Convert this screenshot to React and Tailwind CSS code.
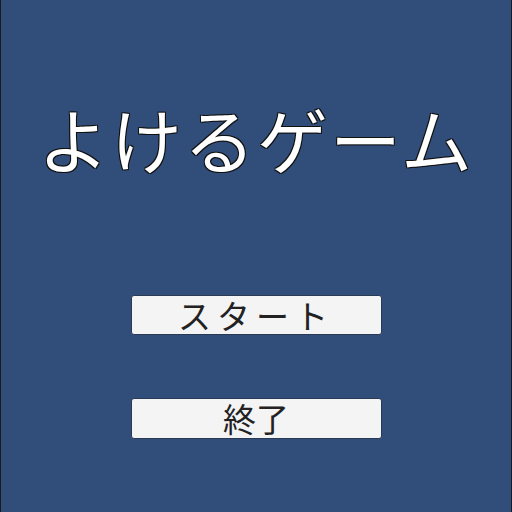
export default function App() {
    const jp = { fontFamily: '"Noto Sans CJK JP", "Noto Sans", sans-serif' };
    return (
        <div className="w-[512px] h-[512px] bg-[#314e7b] border-x border-[#1c1c1c] flex flex-col items-center" style={jp}>
            <h1
                className="mt-[95px] text-[71px] leading-[84px] font-normal text-white tracking-[2px]"
                style={{ textShadow: '1px 1px 0 #111, -1px -1px 0 #111, 1px -1px 0 #111, -1px 1px 0 #111' }}
            >
                よけるゲーム
            </h1>
            <div className="mt-[116px] flex flex-col gap-[63px]">
                <button className="w-[251px] h-[40px] bg-[#f4f4f4] rounded-[3px] border border-[#2a3a55] text-[33px] leading-none font-normal text-[#222] tracking-[6px] flex items-center justify-center">
                    スタート
                </button>
                <button className="w-[251px] h-[41px] bg-[#f4f4f4] rounded-[3px] border border-[#2a3a55] text-[33px] leading-none font-normal text-[#222] flex items-center justify-center">
                    終了
                </button>
            </div>
        </div>
    );
}
